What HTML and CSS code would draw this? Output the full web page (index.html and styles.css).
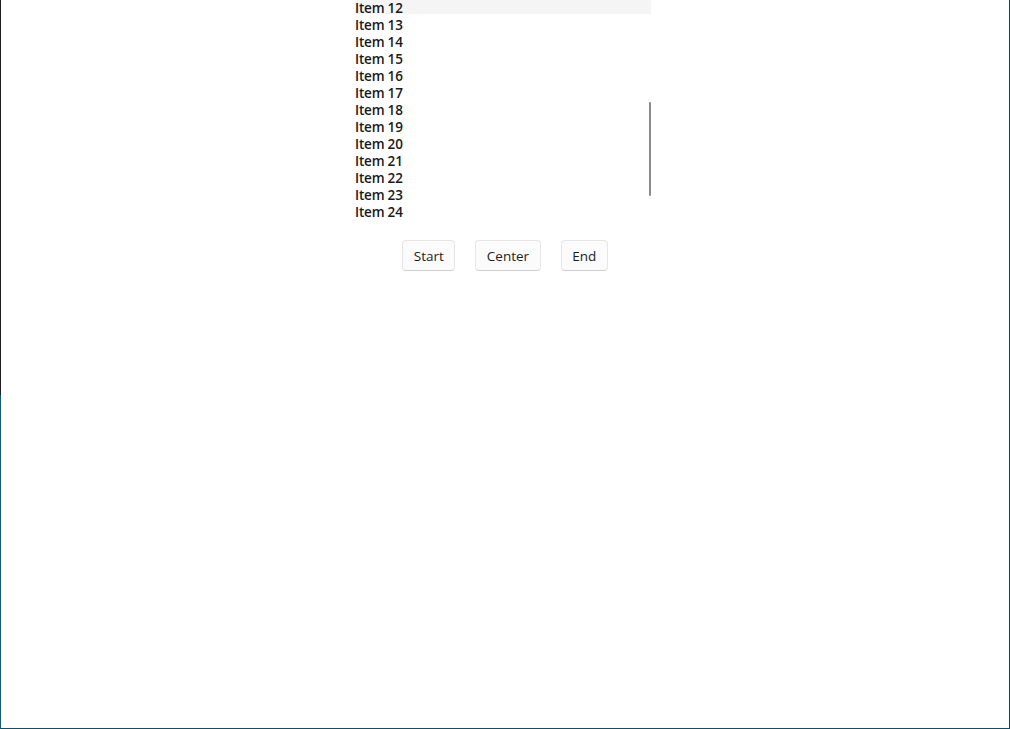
FILE: index.html
```html
<!DOCTYPE html>
<html>
<head>
<meta charset="utf-8">
<link rel="stylesheet" href="styles.css">
</head>
<body>
<div class="window">
  <div class="content">
    <div class="list-box">
      <ul class="list">
        <li class="row selected">Item 12</li>
        <li class="row">Item 13</li>
        <li class="row">Item 14</li>
        <li class="row">Item 15</li>
        <li class="row">Item 16</li>
        <li class="row">Item 17</li>
        <li class="row">Item 18</li>
        <li class="row">Item 19</li>
        <li class="row">Item 20</li>
        <li class="row">Item 21</li>
        <li class="row">Item 22</li>
        <li class="row">Item 23</li>
        <li class="row">Item 24</li>
      </ul>
      <div class="scroll-thumb"></div>
    </div>
    <div class="buttons">
      <button class="btn">Start</button>
      <button class="btn">Center</button>
      <button class="btn">End</button>
    </div>
  </div>
</div>
</body>
</html>
```

FILE: styles.css
```css
html, body {
  margin: 0;
  padding: 0;
  height: 100%;
}
body {
  background: linear-gradient(to bottom, #1f1f1f 0, #1f1f1f 395px, #0f5b77 395px, #0f5b77 100%);
  font-family: "Open Sans", "Noto Sans", sans-serif;
  overflow: hidden;
}
.window {
  margin-left: 1px;
  width: 1008px;
  height: 728px;
  background: #ffffff;
  border-right: 1px solid #1d3a56;
  border-bottom: 1px solid #0f4e6b;
}
.content {
  display: flex;
  flex-direction: column;
  align-items: center;
}
.list-box {
  position: relative;
  width: 296px;
  height: 221px;
  margin-left: -4px;
  overflow: hidden;
}
.list {
  list-style: none;
  margin: 0;
  padding: 0;
}
.row {
  height: 17px;
  line-height: 17px;
  font-size: 13.5px;
  color: #1a1a1a;
  font-weight: 600;
  letter-spacing: -0.2px;
}
.row.selected {
  background: linear-gradient(to bottom, #f5f5f5 0, #f5f5f5 14px, transparent 14px);
}
.scroll-thumb {
  position: absolute;
  right: 0;
  top: 102px;
  width: 2px;
  height: 94px;
  border-radius: 1px;
  background: #8a8a8a;
}
.buttons {
  display: flex;
  gap: 20px;
  margin-top: 19px;
  margin-left: 0;
}
.btn {
  height: 31px;
  padding: 0 10.5px;
  font-family: "Open Sans", "Noto Sans", sans-serif;
  font-size: 13.5px;
  color: #1b1b1b;
  background: #fbfbfb;
  border: 1px solid #e6e6e6;
  border-bottom-color: #cfcfcf;
  border-radius: 4px;
}
```
